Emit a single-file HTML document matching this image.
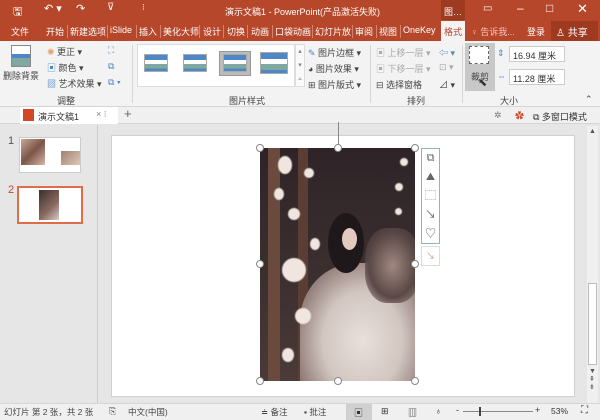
<!DOCTYPE html>
<html><head><meta charset="utf-8"><style>
*{margin:0;padding:0;box-sizing:border-box}
body{width:600px;height:420px;overflow:hidden;position:relative;background:#e6e6e6;font-family:"Liberation Sans","Noto Sans CJK SC",sans-serif;font-size:9px;color:#333}
.a{position:absolute;white-space:nowrap}
.w{color:#fff}
.t{color:#fff;font-size:9px;top:25px}
.sep{position:absolute;width:1px;background:#d2846f;top:25px;height:13px}
.g{color:#444;font-size:9px}
.thumb{position:absolute;width:24px;height:18px;border:1px solid #aaa;background:linear-gradient(#4f86c6 0 30%,#fff 30% 55%,#7ea8a0 55% 85%,#4f86c6 85%)}
.h{position:absolute;width:8px;height:8px;border-radius:50%;background:#fff;border:1px solid #888}
.dot{position:absolute;border-radius:50%;background:#f1e6df;filter:blur(0.6px)}
</style></head><body>
<div class="a" style="left:0;top:0;width:600px;height:41px;background:#b7472a"></div>
<div class="a" style="left:441px;top:0;width:24px;height:20px;background:#9e3a20"></div>
<div class="a w" style="left:13px;top:3px;font-size:11px">🖫</div>
<div class="a w" style="left:44px;top:2px;font-size:11px">↶ ▾</div>
<div class="a w" style="left:76px;top:2px;font-size:11px">↷</div>
<div class="a w" style="left:107px;top:2px;font-size:10px">⊽</div>
<div class="a w" style="left:142px;top:2px;font-size:9px">⁝</div>
<div class="a w" style="left:225px;top:5px;font-size:9px">演示文稿1 - PowerPoint(产品激活失败)</div>
<div class="a w" style="left:444px;top:5px;font-size:9px">图…</div>
<div class="a w" style="left:483px;top:3px;font-size:10px">▭</div>
<div class="a w" style="left:517px;top:1px;font-size:12px">–</div>
<div class="a w" style="left:546px;top:1px;font-size:12px">□</div>
<div class="a w" style="left:577px;top:1px;font-size:13px">✕</div>
<div class="a t" style="left:11px">文件</div>
<div class="a t" style="left:46px">开始</div><div class="sep" style="left:67px"></div>
<div class="a t" style="left:70px">新建选项</div><div class="sep" style="left:107px"></div>
<div class="a t" style="left:110px">iSlide</div><div class="sep" style="left:136px"></div>
<div class="a t" style="left:139px">插入</div><div class="sep" style="left:160px"></div>
<div class="a t" style="left:163px">美化大师</div><div class="sep" style="left:199px"></div>
<div class="a t" style="left:203px">设计</div><div class="sep" style="left:223px"></div>
<div class="a t" style="left:227px">切换</div><div class="sep" style="left:247px"></div>
<div class="a t" style="left:251px">动画</div><div class="sep" style="left:272px"></div>
<div class="a t" style="left:275px">口袋动画</div><div class="sep" style="left:312px"></div>
<div class="a t" style="left:315px">幻灯片放</div><div class="sep" style="left:352px"></div>
<div class="a t" style="left:355px">审阅</div><div class="sep" style="left:376px"></div>
<div class="a t" style="left:379px">视图</div><div class="sep" style="left:400px"></div>
<div class="a t" style="left:403px">OneKey</div>
<div class="a" style="left:441px;top:21px;width:24px;height:20px;background:#f3f3f3"></div>
<div class="a" style="left:444px;top:25px;color:#b7472a">格式</div>
<div class="a" style="left:471px;top:25px;color:#f0c8bb">♀ 告诉我...</div>
<div class="a t" style="left:527px">登录</div>
<div class="a" style="left:551px;top:21px;width:47px;height:20px;background:#9e3a20"></div>
<div class="a w" style="left:556px;top:24px;font-size:10px">♙ 共享</div>
<!-- ribbon -->
<div class="a" style="left:0;top:41px;width:600px;height:66px;background:#f3f3f3;border-bottom:1px solid #d6d6d6"></div>
<div class="a" style="left:11px;top:45px;width:20px;height:22px;border:1px solid #888;background:linear-gradient(#fff 0 40%,#4f86c6 40% 60%,#7ea8a0 60%)"></div>
<div class="a g" style="left:3px;top:69px">删除背景</div>
<div class="a g" style="left:47px;top:45px"><span style="color:#e8a070">✺</span> 更正 ▾</div>
<div class="a g" style="left:47px;top:61px"><span style="color:#4f86c6">▣</span> 颜色 ▾</div>
<div class="a g" style="left:47px;top:77px"><span style="color:#4f86c6">▨</span> 艺术效果 ▾</div>
<div class="a g" style="left:108px;top:45px;color:#4f86c6">⛶</div>
<div class="a g" style="left:108px;top:61px;color:#4f86c6">⧉</div>
<div class="a g" style="left:108px;top:77px;color:#4f86c6">⧉ ▾</div>
<div class="a g" style="left:57px;top:94px">调整</div>
<div class="a" style="left:132px;top:45px;width:1px;height:58px;background:#d6d6d6"></div>
<div class="a" style="left:137px;top:44px;width:158px;height:43px;background:#fff;border:1px solid #ddd"></div>
<div class="thumb" style="left:144px;top:54px"></div>
<div class="thumb" style="left:183px;top:54px"></div>
<div class="a" style="left:219px;top:51px;width:32px;height:25px;background:#bbb;border:1px solid #999"></div>
<div class="thumb" style="left:223px;top:54px"></div>
<div class="thumb" style="left:260px;top:52px;width:28px;height:22px"></div>
<div class="a" style="left:295px;top:44px;width:10px;height:43px;border:1px solid #ddd;background:#fafafa;font-size:7px;color:#888;text-align:center;line-height:14px">▴<br>▾<br>⩡</div>
<div class="a g" style="left:229px;top:94px">图片样式</div>
<div class="a g" style="left:308px;top:46px"><span style="color:#4f86c6">✎</span> 图片边框 ▾</div>
<div class="a g" style="left:308px;top:62px">◕ 图片效果 ▾</div>
<div class="a g" style="left:308px;top:78px">⊞ 图片版式 ▾</div>
<div class="a" style="left:370px;top:45px;width:1px;height:58px;background:#d6d6d6"></div>
<div class="a" style="left:376px;top:46px;color:#aaa">▣ 上移一层 ▾</div>
<div class="a" style="left:376px;top:62px;color:#aaa">▣ 下移一层 ▾</div>
<div class="a g" style="left:376px;top:78px">⊟ 选择窗格</div>
<div class="a" style="left:439px;top:46px;color:#4f86c6">⇦ ▾</div>
<div class="a" style="left:439px;top:62px;color:#aaa">⊡ ▾</div>
<div class="a g" style="left:439px;top:78px">⊿ ▾</div>
<div class="a g" style="left:407px;top:94px">排列</div>
<div class="a" style="left:462px;top:45px;width:1px;height:58px;background:#d6d6d6"></div>
<div class="a" style="left:465px;top:43px;width:30px;height:48px;background:#c8c8c8"></div>
<div class="a" style="left:469px;top:46px;width:20px;height:18px;border:1px dashed #666;background:#fff"></div>
<div class="a g" style="left:471px;top:70px">裁剪</div>
<div class="a" style="left:478px;top:76px;font-size:11px">⬉</div>
<div class="a g" style="left:497px;top:48px;color:#4f86c6">⇕</div>
<div class="a" style="left:509px;top:46px;width:56px;height:16px;background:#fff;border:1px solid #ccc;padding:2px 0 0 3px">16.94 厘米</div>
<div class="a g" style="left:497px;top:71px;color:#4f86c6">⇔</div>
<div class="a" style="left:509px;top:69px;width:56px;height:16px;background:#fff;border:1px solid #ccc;padding:2px 0 0 3px">11.28 厘米</div>
<div class="a g" style="left:500px;top:94px">大小</div>
<div class="a g" style="left:585px;top:94px">⌃</div>
<!-- doc tab bar -->
<div class="a" style="left:0;top:107px;width:600px;height:17px;background:#f0f0f0;border-bottom:1px solid #d6d6d6"></div>
<div class="a" style="left:20px;top:107px;width:98px;height:17px;background:#fff"></div>
<div class="a" style="left:23px;top:109px;width:11px;height:12px;background:#d24726"></div>
<div class="a" style="left:38px;top:110px">演示文稿1</div>
<div class="a" style="left:96px;top:109px;color:#888">× ⁝</div>
<div class="a" style="left:124px;top:106px;font-size:13px;color:#666">+</div>
<div class="a" style="left:494px;top:110px;color:#777">✲</div>
<div class="a" style="left:515px;top:109px;color:#d24726">✿</div>
<div class="a" style="left:533px;top:110px">⧉ 多窗口模式</div>
<!-- left panel -->
<div class="a" style="left:97px;top:125px;width:1px;height:278px;background:#ccc"></div>
<div class="a" style="left:8px;top:135px;font-size:11px;color:#555">1</div>
<div class="a" style="left:19px;top:137px;width:62px;height:36px;background:#fff;border:1px solid #ccc"></div>
<div class="a" style="left:21px;top:139px;width:24px;height:26px;background:linear-gradient(135deg,#c9a898,#7a5548,#d8b8a8)"></div>
<div class="a" style="left:61px;top:151px;width:19px;height:14px;background:linear-gradient(135deg,#a08070,#e0c8b8)"></div>
<div class="a" style="left:8px;top:184px;font-size:11px;color:#d24726">2</div>
<div class="a" style="left:17px;top:186px;width:66px;height:38px;background:#fff;border:2px solid #e06c4c"></div>
<div class="a" style="left:39px;top:190px;width:20px;height:30px;background:linear-gradient(135deg,#3a2e2e,#8a6a60 60%,#d8ccc8)"></div>
<!-- slide -->
<div class="a" style="left:111px;top:135px;width:464px;height:262px;background:#fff;border:1px solid #d0d0d0"></div>
<div class="a" style="left:587px;top:126px;width:11px;height:277px;background:#f0f0f0"></div>
<div class="a" style="left:588px;top:283px;width:9px;height:82px;background:#fff;border:1px solid #bbb"></div>
<div class="a" style="left:589px;top:128px;font-size:7px;color:#555">▲</div>
<div class="a" style="left:589px;top:368px;font-size:7px;color:#555">▼<br>⇞<br>⇟</div>
<!-- image -->
<div class="a" style="left:260px;top:148px;width:155px;height:233px;overflow:hidden;background:linear-gradient(180deg,#2e2428,#3a2e2e 50%,#4a3a38)">
<div class="a" style="left:8px;top:0;width:12px;height:233px;background:#6a4a3c"></div>
<div class="a" style="left:38px;top:0;width:10px;height:233px;background:#5a3e34"></div>
<div class="a" style="left:40px;top:115px;width:125px;height:130px;border-radius:45% 45% 0 0;background:radial-gradient(ellipse at 50% 60%,#e8e0dc 0%,#d2c6c0 45%,#8a7470 80%,rgba(60,50,50,0) 100%)"></div>
<div class="a" style="left:68px;top:65px;width:36px;height:60px;border-radius:50%;background:#1e181a"></div>
<div class="a" style="left:82px;top:80px;width:15px;height:22px;border-radius:50%;background:#e2cac0"></div>
<div class="a" style="left:105px;top:80px;width:55px;height:75px;border-radius:40%;background:radial-gradient(#a08880,#5a4846 60%,rgba(0,0,0,0))"></div>
<div class="dot" style="left:18px;top:8px;width:14px;height:18px"></div>
<div class="dot" style="left:22px;top:110px;width:24px;height:24px"></div>
<div class="dot" style="left:14px;top:40px;width:10px;height:12px"></div>
<div class="dot" style="left:28px;top:60px;width:12px;height:12px"></div>
<div class="dot" style="left:35px;top:160px;width:16px;height:16px"></div>
<div class="dot" style="left:22px;top:200px;width:12px;height:14px"></div>
<div class="dot" style="left:44px;top:20px;width:10px;height:10px"></div>
<div class="dot" style="left:50px;top:90px;width:10px;height:12px"></div>
<div class="dot" style="left:140px;top:10px;width:8px;height:8px"></div>
<div class="dot" style="left:135px;top:35px;width:8px;height:8px"></div>
<div class="dot" style="left:135px;top:60px;width:7px;height:7px"></div>
</div>
<div class="a" style="left:338px;top:122px;width:1px;height:26px;background:#888"></div>
<div class="h" style="left:256px;top:144px"></div><div class="h" style="left:334px;top:144px"></div><div class="h" style="left:411px;top:144px"></div>
<div class="h" style="left:256px;top:260px"></div><div class="h" style="left:411px;top:260px"></div>
<div class="h" style="left:256px;top:377px"></div><div class="h" style="left:334px;top:377px"></div><div class="h" style="left:411px;top:377px"></div>
<div class="a" style="left:421px;top:148px;width:19px;height:96px;background:#fff;border:1px solid #8ab4cc;color:#666;font-size:11px;line-height:19px;text-align:center">⧉<br>⛰<br>⬚<br>↘<br>♡</div>
<div class="a" style="left:421px;top:246px;width:19px;height:20px;background:#fff;border:1px solid #ddd;color:#c98;text-align:center;line-height:18px">↘</div>
<!-- status bar -->
<div class="a" style="left:0;top:403px;width:600px;height:17px;background:#f0f0f0;border-top:1px solid #d6d6d6"></div>
<div class="a" style="left:4px;top:406px;font-size:8.5px;color:#444">幻灯片 第 2 张，共 2 张</div>
<div class="a" style="left:109px;top:406px;font-size:9px;color:#444">⎘</div>
<div class="a" style="left:128px;top:406px;font-size:8.5px;color:#444">中文(中国)</div>
<div class="a" style="left:261px;top:406px;font-size:8.5px;color:#444">≐ 备注</div>
<div class="a" style="left:304px;top:406px;font-size:8.5px;color:#444">▪ 批注</div>
<div class="a" style="left:346px;top:404px;width:26px;height:16px;background:#d0d0d0"></div>
<div class="a" style="left:354px;top:406px;font-size:9px">▣</div>
<div class="a" style="left:381px;top:406px;font-size:9px">⊞</div>
<div class="a" style="left:408px;top:406px;font-size:9px">▥</div>
<div class="a" style="left:435px;top:406px;font-size:9px">♁</div>
<div class="a" style="left:456px;top:405px;font-size:9px">-</div>
<div class="a" style="left:463px;top:411px;width:70px;height:1px;background:#888"></div>
<div class="a" style="left:479px;top:407px;width:2px;height:9px;background:#444"></div>
<div class="a" style="left:535px;top:405px;font-size:9px">+</div>
<div class="a" style="left:551px;top:406px;font-size:8.5px">53%</div>
<div class="a" style="left:581px;top:405px;font-size:10px">⛶</div>
</body></html>
